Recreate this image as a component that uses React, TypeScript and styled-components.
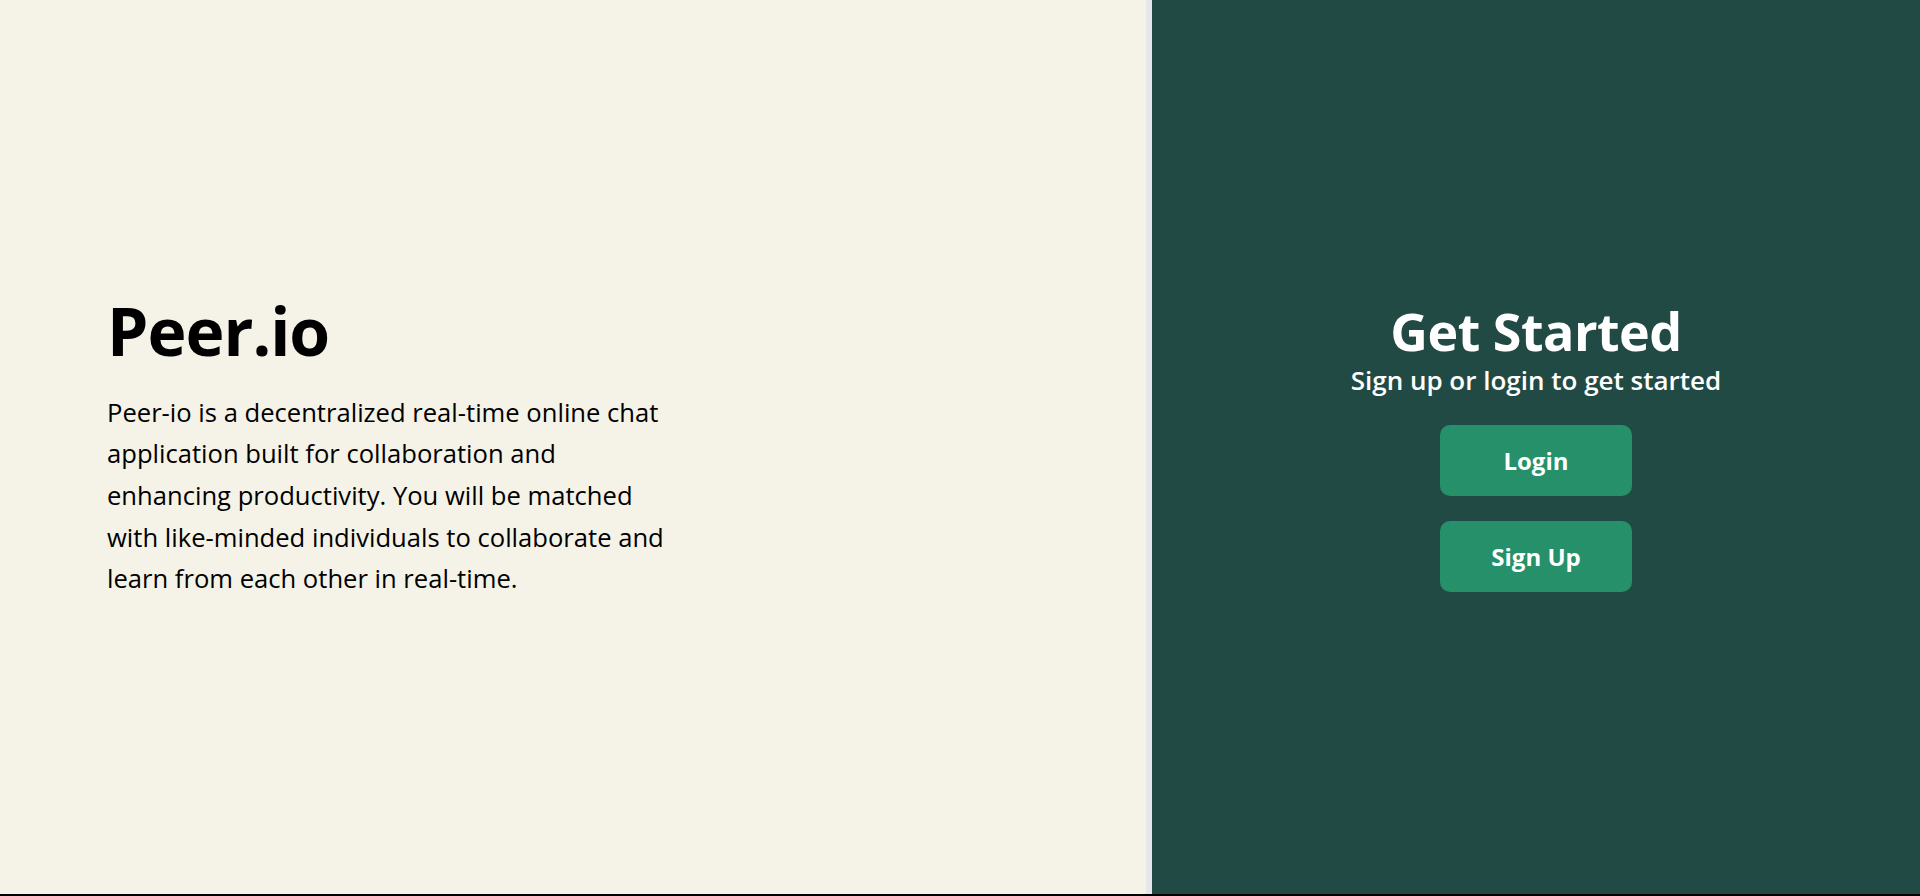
import React from "react";
import styled, { createGlobalStyle } from "styled-components";

const Global = createGlobalStyle`
  html, body { margin: 0; padding: 0; background: #000; }
  body { font-family: "Open Sans", "Noto Sans", sans-serif; }
  * { box-sizing: border-box; }
`;

const Page = styled.div`
  display: flex;
  height: 894px;
  background: #f5f2e8;
`;

const Intro = styled.section`
  flex: 0 0 1146px;
  display: flex;
  flex-direction: column;
  justify-content: center;
  padding-left: 107px;
  background: #f5f2e8;
  color: #000;
`;

const Divider = styled.div`
  flex: 0 0 6px;
  background: #e6e7eb;
`;

const Title = styled.h1`
  margin: 0 0 25px;
  font-size: 66px;
  line-height: 1.1;
  font-weight: 700;
  letter-spacing: -1px;
`;

const Description = styled.p`
  margin: 0;
  max-width: 568px;
  font-size: 25.6px;
  line-height: 41.6px;
  font-weight: 400;
`;

const Access = styled.section`
  flex: 1;
  display: flex;
  flex-direction: column;
  align-items: center;
  justify-content: center;
  background: #224a45;
  color: #fff;
`;

const AccessTitle = styled.h2`
  margin: 0;
  font-size: 52px;
  line-height: 1.1;
  font-weight: 700;
  letter-spacing: -0.5px;
`;

const AccessSubtitle = styled.p`
  margin: 5px 0 28px;
  font-size: 26px;
  line-height: 1.3;
  font-weight: 600;
`;

const Actions = styled.div`
  display: flex;
  flex-direction: column;
  gap: 25px;
`;

const ActionButton = styled.button`
  width: 192px;
  height: 71px;
  border: none;
  border-radius: 10px;
  background: #25906a;
  color: #fff;
  font-family: inherit;
  font-size: 24px;
  font-weight: 700;
  cursor: pointer;
`;

export default function App() {
  return (
    <>
      <Global />
      <Page>
        <Intro>
          <Title>Peer.io</Title>
          <Description>
            Peer-io is a decentralized real-time online chat application built
            for collaboration and enhancing productivity. You will be matched
            with like-minded individuals to collaborate and learn from each
            other in real-time.
          </Description>
        </Intro>
        <Divider />
        <Access>
          <AccessTitle>Get Started</AccessTitle>
          <AccessSubtitle>Sign up or login to get started</AccessSubtitle>
          <Actions>
            <ActionButton>Login</ActionButton>
            <ActionButton>Sign Up</ActionButton>
          </Actions>
        </Access>
      </Page>
    </>
  );
}
